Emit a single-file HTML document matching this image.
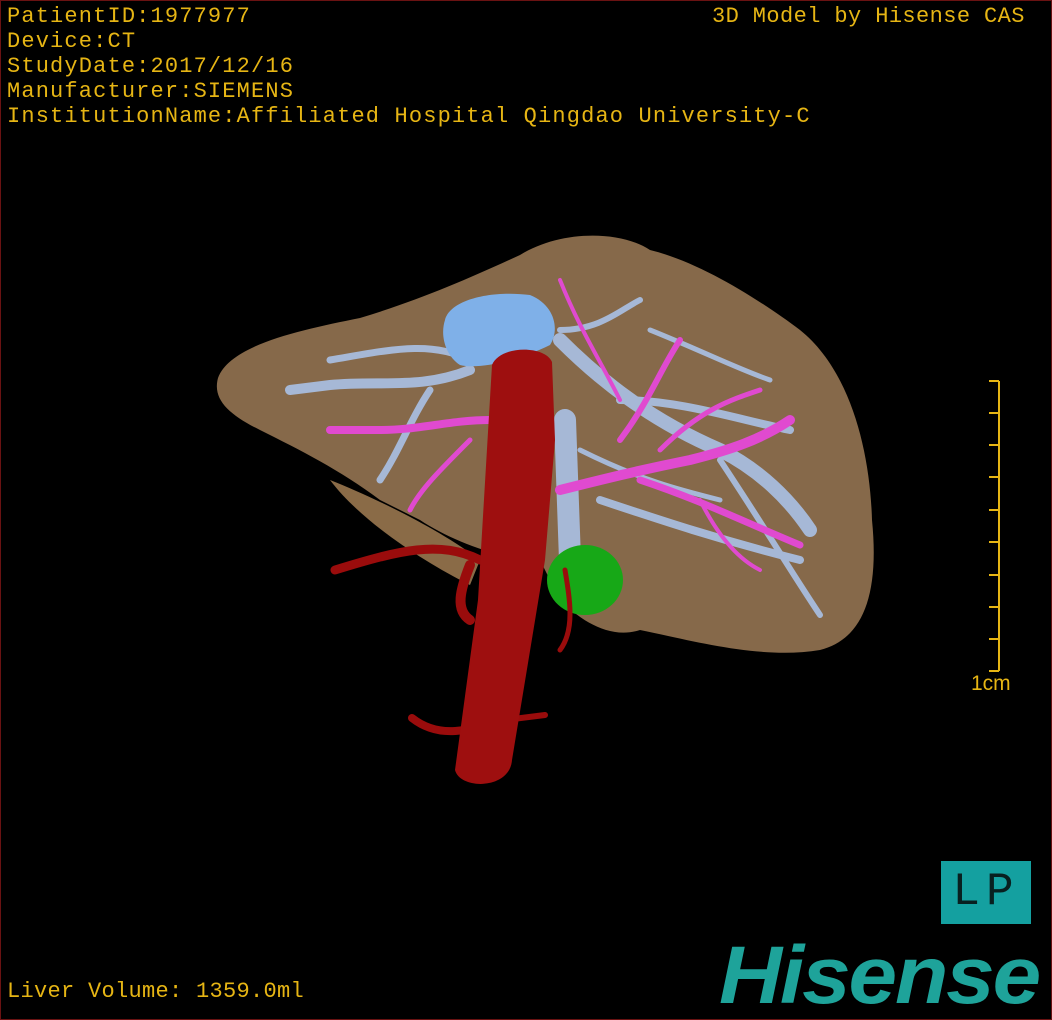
<!DOCTYPE html>
<html><head><meta charset="utf-8"><style>
html,body{margin:0;padding:0;background:#000;}
#w{position:relative;width:1050px;height:1018px;border:1px solid #6a1212;overflow:hidden;background:#000;}
.t{position:absolute;left:6px;color:#e6b514;font:22px "Liberation Mono","DejaVu Sans Mono",monospace;letter-spacing:1.15px;white-space:pre;line-height:25px;}
</style></head><body><div id="w">
<svg width="1052" height="1020" style="position:absolute;left:-1px;top:-1px">
<path d="M218 378 C230 345 300 330 360 318 C420 300 470 278 520 255 C560 230 620 230 650 250 C700 262 760 300 800 330 C850 370 870 450 872 520 C880 600 860 640 820 650 C760 660 690 640 640 630 C610 640 580 620 560 600 L540 560 C500 560 450 540 420 520 L380 500 C340 470 300 450 260 430 C230 415 212 400 218 378 Z" fill="#86694a"/>
<path d="M330 480 C360 520 420 560 470 585 L480 560 C440 530 380 500 330 480Z" fill="#8a6b47"/>
<g stroke="#a6b8d6" stroke-linecap="round" fill="none">
<path d="M560 340 C600 380 650 420 720 450 C760 470 790 500 810 530" stroke-width="14"/>
<path d="M620 400 C680 400 740 420 790 430" stroke-width="8"/>
<path d="M600 500 C660 520 720 540 800 560" stroke-width="8"/>
<path d="M720 460 C760 520 790 570 820 615" stroke-width="6"/>
<path d="M470 370 C420 390 380 380 330 385 L290 390" stroke-width="10"/>
<path d="M470 360 C430 340 390 350 330 360" stroke-width="7"/>
<path d="M430 390 C410 420 400 450 380 480" stroke-width="7"/>
<path d="M560 330 C600 330 620 310 640 300" stroke-width="6"/>
<path d="M580 450 C640 480 680 490 720 500" stroke-width="5"/>
<path d="M650 330 C700 350 740 370 770 380" stroke-width="5"/>
<path d="M565 420 L570 560" stroke-width="22"/>
</g>
<path d="M445 320 C450 300 490 290 530 295 C555 305 560 330 550 345 C520 360 480 370 460 365 C445 355 440 335 445 320Z" fill="#7fb0e8"/>
<g stroke="#e04ad0" stroke-linecap="round" fill="none">
<path d="M560 490 C600 480 640 470 690 460 C730 450 760 440 790 420" stroke-width="10"/>
<path d="M640 480 C700 500 740 520 800 545" stroke-width="7"/>
<path d="M620 440 C650 400 660 370 680 340" stroke-width="6"/>
<path d="M490 420 C450 420 420 430 380 430 L330 430" stroke-width="8"/>
<path d="M470 440 C440 470 420 490 410 510" stroke-width="5"/>
<path d="M660 450 C700 410 730 400 760 390" stroke-width="5"/>
<path d="M560 280 C580 330 600 360 620 400" stroke-width="4"/>
<path d="M700 500 C720 540 740 560 760 570" stroke-width="4"/>
</g>
<ellipse cx="585" cy="580" rx="38" ry="35" fill="#17a817"/>
<g stroke="#9a0c0c" stroke-linecap="round" fill="none">
<path d="M480 560 C440 540 400 550 335 570" stroke-width="9"/>
<path d="M470 565 C460 590 455 610 470 620" stroke-width="10"/>
<path d="M500 720 C470 730 440 740 412 718" stroke-width="8"/>
<path d="M505 720 L545 715" stroke-width="6"/>
<path d="M565 570 C570 600 575 630 560 650" stroke-width="5"/>
</g>
<path d="M492 365 C500 345 545 345 552 362 L555 440 L545 560 L512 760 C510 790 460 790 455 770 L478 600 Z" fill="#9e0f0f"/>
<g stroke="#e6b514" stroke-width="2" fill="none">
<path d="M999 381 V671 M989 381 H999 M989 413 H999 M989 445 H999 M989 477 H999 M989 510 H999 M989 542 H999 M989 575 H999 M989 607 H999 M989 639 H999 M989 671 H999"/>
</g>
</svg>
<div class="t" style="top:3px">PatientID:1977977
Device:CT
StudyDate:2017/12/16
Manufacturer:SIEMENS
InstitutionName:Affiliated Hospital Qingdao University-C</div>
<div class="t" style="top:3px;left:711px;letter-spacing:0.4px">3D Model by Hisense CAS</div>
<div class="t" style="top:670px;left:970px;font-family:'Liberation Sans',sans-serif;letter-spacing:0;font-size:21px">1cm</div>
<div class="t" style="top:978px;letter-spacing:0.3px">Liver Volume: 1359.0ml</div>
<div style="position:absolute;left:940px;top:860px;width:90px;height:63px;background:#14a0a0;color:#082020;font:46px 'Liberation Mono',monospace;line-height:63px;text-align:center;letter-spacing:6px">LP</div>
<div style="position:absolute;left:718px;top:930px;color:#1ea39a;font:italic bold 82px 'Liberation Sans',sans-serif;line-height:90px;transform:scaleX(1.065);transform-origin:left;letter-spacing:-2px">Hisense</div>
</div></body></html>
